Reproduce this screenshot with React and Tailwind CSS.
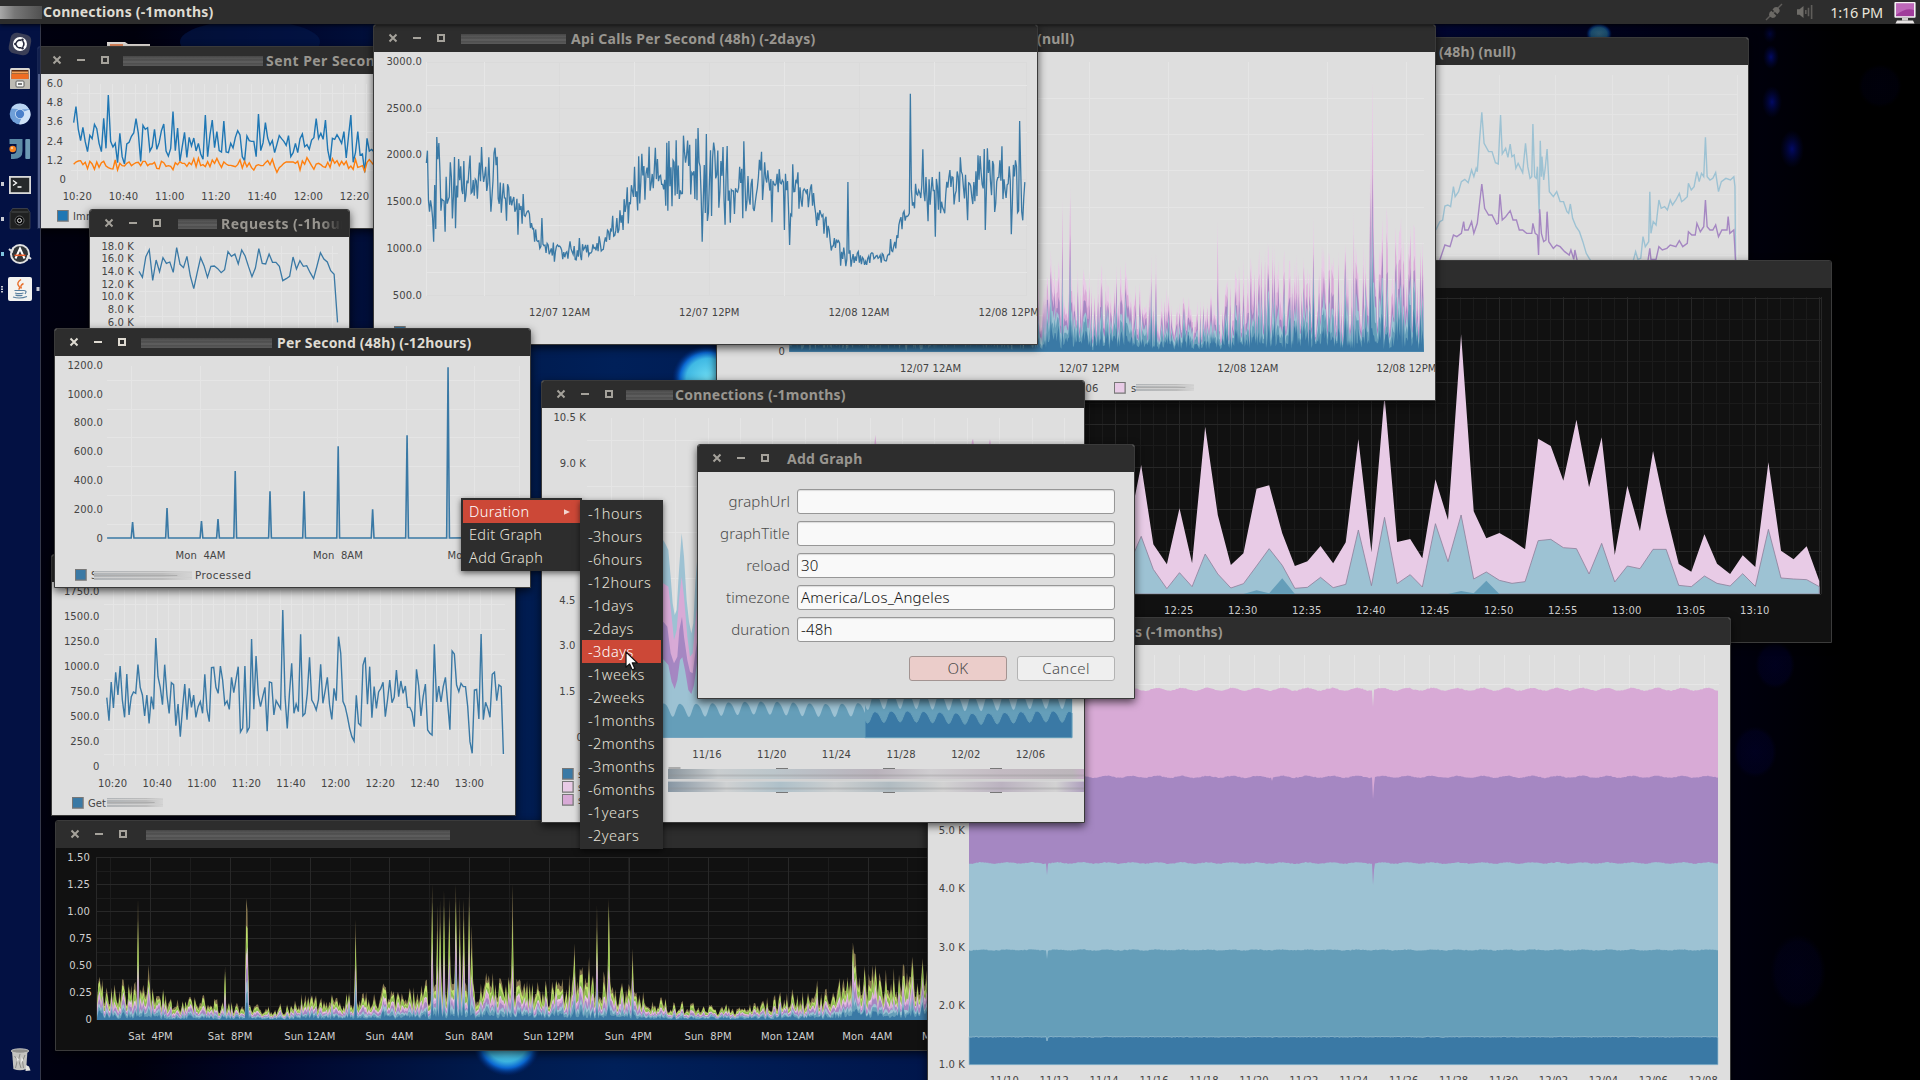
import React from "react";

/* ---------- helpers ---------- */

function rng(seed) {
  let s = seed;
  return () => {
    s = (s * 1664525 + 1013904223) % 4294967296;
    return s / 4294967296;
  };
}

function lerpAt(keys, x) {
  if (x <= keys[0][0]) return keys[0].slice(1);
  for (let i = 1; i < keys.length; i++) {
    if (x <= keys[i][0]) {
      const a = keys[i - 1];
      const b = keys[i];
      const t = (x - a[0]) / (b[0] - a[0]);
      return a.slice(1).map((v, k) => v + (b[k + 1] - v) * t);
    }
  }
  return keys[keys.length - 1].slice(1);
}

const even = (ys, x0, dx) => ys.map((y, i) => `${(x0 + i * dx).toFixed(1)},${y}`).join(" ");

function stack({ seed, x0, x1, dx, base, keys, spikes, shares, jitter }) {
  const rand = rng(seed);
  const cols = [];
  for (let x = x0; x <= x1; x += dx) {
    const [h] = lerpAt(keys, x);
    let total = h * (1 - jitter + jitter * 1.6 * Math.pow(rand(), 1.15));
    const spike = spikes.find((s) => Math.abs(s[0] - x) <= dx / 2);
    if (spike) total = base - spike[1];
    const parts = shares.map((s) => s * (0.3 + 1.4 * rand()));
    const sum = parts.reduce((a, b) => a + b, 0);
    let acc = 0;
    cols.push([x, parts.map((p) => (acc += (p / sum) * total))]);
  }
  return shares
    .map((_, k) => `${x0},${base} ` + cols.map(([x, c]) => `${x.toFixed(1)},${(base - c[k]).toFixed(1)}`).join(" ") + ` ${x1},${base}`)
    .reverse();
}

const STEEL = "#3a79a5";
const MID = "#659eb9";
const LIGHT = "#9dc2d3";
const VIOLET = "#a587c2";
const ORCHID = "#d8aad6";
const PINK = "#e8cbe6";

/* ---------- chart primitives ---------- */

function Labels({ items, anchor = "middle", dark }) {
  return (
    <g fontFamily='"DejaVu Sans", sans-serif' fontSize="10" letterSpacing="0.1" textAnchor={anchor} fill={dark ? "#cfcfcf" : "#444"}>
      {items.map(([t, x, y], i) => (
        <text key={i} x={x} y={y + 3.7}>{t}</text>
      ))}
    </g>
  );
}

function Grid({ xs, ys, x0, x1, y0, y1, color = "#e6e6e6" }) {
  return (
    <g stroke={color} strokeWidth="1" fill="none">
      {xs.map((x, i) => <path key={"x" + i} d={`M${Math.round(x) + 0.5} ${y0}V${y1}`} />)}
      {ys.map((y, i) => <path key={"y" + i} d={`M${x0} ${Math.round(y) + 0.5}H${x1}`} />)}
    </g>
  );
}

const range = (a, b, s) => {
  const out = [];
  for (let v = a; v <= b; v += s) out.push(v);
  return out;
};

function Line({ points, color = STEEL, width = 1.3 }) {
  return <polyline points={points} fill="none" stroke={color} strokeWidth={width} vectorEffect="non-scaling-stroke" />;
}

function Swatch({ x, y, color }) {
  return (
    <g>
      <rect x={x} y={y} width="12" height="12" fill="#a9a9a9" />
      <rect x={x + 0.5} y={y + 0.5} width="10.5" height="10.5" fill={color} stroke="#777" />
    </g>
  );
}

function Blur({ x, y, w, h = 9, id }) {
  return (
    <g>
      <defs>
        <linearGradient id={id}>
          <stop offset="0" stopColor="#b1b5b8" />
          <stop offset="0.7" stopColor="#bcbcbc" />
          <stop offset="1" stopColor="#c4c4c4" stopOpacity="0.35" />
        </linearGradient>
      </defs>
      <rect x={x} y={y} width={w} height={h} fill={`url(#${id})`} />
      <path d={`M${x} ${y + 1.5}h${w}M${x} ${y + h - 2.5}h${w}`} stroke="#cfcfcf" />
      <path d={`M${x} ${y + h / 2}h${w * 0.85}`} stroke="#adadad" />
    </g>
  );
}

/* ---------- window chrome ---------- */

function Controls({ active }) {
  return (
    <svg className="-mt-px ml-[13px] h-[12px] w-[60px] shrink-0" viewBox="0 0 60 12" fill="none" stroke={active ? "#dfdbd2" : "#a5a29b"} strokeWidth="2">
      <path d="M2.5 2.5l7 7M9.500 2.5l-7 7" />
      <path d="M26 6h8" />
      <rect x="51" y="3" width="6" height="6" />
    </svg>
  );
}

function Window({ x, y, w, h, title, smudge = 0, gap = 4, pad = 16, dark, active, fade, tracking = "tracking-[0.22px]", children }) {
  return (
    <section
      className={`absolute flex flex-col overflow-hidden rounded-t-[3px] border shadow-[0_3px_9px_rgba(0,0,0,0.65)] ${dark ? "border-[#3b3b3b] bg-[#111111]" : "border-[#3a3a3a] bg-[#dedede]"}`}
      style={{ left: x, top: y, width: w, height: h }}
    >
      <header className="flex h-[27px] shrink-0 items-center bg-[#2d2d2d]">
        <Controls active={active} />
        {smudge > 0 && (
          <span
            className="mt-px h-[10px] shrink-0 bg-[linear-gradient(180deg,#464646,#565656_25%,#4c4c4c_40%,#626262_60%,#505050_75%,#5a5a5a)]"
            style={{ width: smudge, marginLeft: pad }}
          />
        )}
        <span
          className={`whitespace-pre text-[14px] leading-[20px] font-bold font-["Noto_Sans",sans-serif] ${tracking} ${active ? "text-[#dfdbd2]" : "text-[#999690]"} ${fade ? "overflow-hidden [mask-image:linear-gradient(90deg,#000_82%,transparent)]" : ""}`}
          style={{ marginLeft: smudge > 0 ? gap : pad, width: fade }}
        >
          {title}
        </span>
      </header>
      {typeof children === "function" ? (
        <svg className="block shrink-0" width={w - 2} height={h - 29} viewBox={`${x + 1} ${y + 28} ${w - 2} ${h - 29}`}>
          {children()}
        </svg>
      ) : (
        children
      )}
    </section>
  );
}

/* ---------- series data ---------- */

const SENT = [368,320,388,422,382,425,455,406,416,373,386,430,455,355,445,285,424,441,430,488,400,470,492,432,427,409,399,356,400,484,376,388,383,453,440,388,448,428,392,372,453,468,445,335,452,384,484,440,397,472,412,438,414,453,430,462,478,345,470,405,360,443,395,452,456,363,456,458,430,444,412,392,405,470,482,408,422,424,424,470,342,452,428,368,414,435,422,458,433,407,416,424,436,407,470,458,430,458,416,402,440,434,448,420,413,356,415,400,418,360,450,484,415,418,404,416,430,395,474,408,345,487,457,395,465,462,517,415,453,448,456];
const SENT_B = [493,486,483,482,494,487,506,484,492,508,486,502,488,484,498,503,506,507,480,510,490,497,498,490,486,497,492,488,487,497,484,484,497,492,492,487,505,506,484,488,499,497,499,509,488,494,485,490,490,499,488,494,476,500,475,497,494,500,485,500,480,490,475,490,502,486,492,496,496,498,500,494,480,504,484,500,489,503,510,497,494,497,497,488,482,494,478,500,517,503,497,490,486,486,486,486,490,484,510,483,493,473,485,497,508,492,490,494,500,502,487,502,476,490,482,497,484,494,484,505,498,508,478,502,500,497,514,487,479,487,496];
const REQ = [814,832,770,749,841,780,815,773,790,786,817,743,793,803,769,828,866,818,773,797,832,799,798,806,818,809,755,769,762,792,750,768,800,830,804,746,790,792,762,787,787,799,842,836,829,771,807,782,799,797,818,836,798,758,777,786,812,823,967];
const GET = [353,422,306,384,277,345,258,360,412,282,405,350,336,340,254,322,345,408,345,430,350,388,174,290,322,374,254,345,400,308,314,437,372,470,385,312,419,325,382,345,412,380,365,400,283,390,425,263,262,322,340,258,300,374,363,388,292,338,298,260,456,444,258,455,442,177,388,228,343,380,350,322,454,306,308,405,362,374,386,90,350,445,340,250,400,372,395,163,407,400,340,232,360,372,390,360,253,370,333,292,375,418,325,362,170,220,364,380,410,445,470,483,346,430,437,255,232,373,260,413,320,385,336,325,307,410,360,300,368,352,270,350,303,340,318,382,382,397,440,268,318,408,350,312,450,460,465,193,366,318,366,320,292,370,449,213,222,315,335,310,320,320,380,485,520,330,328,417,162,419,367,385,412,283,277,362,315,320,522];

const SPIKES = [[385,606],[485,564],[585,603],[633,597],[683,453],[784,514],[883,514],[982,379],[1082,568],[1182,346],[1301,142]];
const PROCESSED = "311,654 " + SPIKES.map(([x, y]) => `${x - 4},654 ${x},${y} ${x + 4},654`).join(" ") + " 1420,653";

function apiCalls() {
  const keys = [[130,470,620],[150,450,660],[170,500,680],[200,490,600],[230,490,590],[260,480,600],[290,480,600],[310,520,620],[330,590,640],[350,590,670],[370,650,700],[400,720,750],[430,730,780],[470,720,780],[510,730,770],[540,700,750],[560,660,720],[580,610,680],[600,550,640],[620,500,610],[640,490,620],[670,450,600],[700,440,580],[730,420,530],[760,440,620],[800,460,620],[830,480,620],[860,480,620],[900,490,590],[940,510,580],[970,520,640],[1000,550,600],[1030,600,670],[1060,680,730],[1090,720,785],[1125,760,795],[1160,765,785],[1190,750,780],[1210,700,740],[1235,630,670],[1260,530,600],[1300,540,630],[1340,540,610],[1370,500,610],[1400,480,600],[1440,480,600],[1480,470,590],[1511,520,640]];
  const marks = [[132,452],[137,635],[155,411],[147,725],[152,687],[173,695],[185,487],[197,685],[216,483],[257,441],[274,472],[279,635],[289,443],[315,662],[341,704],[352,582],[397,654],[593,562],[610,500],[643,440],[657,443],[681,617],[685,428],[687,632],[705,421],[713,597],[757,384],[766,725],[775,402],[787,648],[792,428],[804,623],[813,441],[818,674],[823,438],[830,668],[840,642],[859,655],[863,424],[877,614],[902,455],[927,667],[955,690],[967,735],[972,647],[996,620],[1019,553],[1085,797],[1102,546],[1245,281],[1274,448],[1288,664],[1303,710],[1325,640],[1337,510],[1362,472],[1377,661],[1406,468],[1420,690],[1440,636],[1457,439],[1478,703],[1499,363],[1502,636]];
  const rand = rng(77);
  const out = [];
  for (let x = 130; x <= 1511; x += 2.4) {
    const [hi, lo] = lerpAt(keys, x);
    const m = marks.find((k) => Math.abs(k[0] - x) <= 1.2);
    const r = 0.5 + (rand() - 0.5) * (rand() < 0.6 ? 1.6 : 0.9);
    out.push(`${x.toFixed(1)},${(m ? m[1] : hi + (lo - hi) * r).toFixed(1)}`);
  }
  return out.join(" ");
}
const API = apiCalls();

const BURST = stack({
  seed: 9, x0: -424, x1: 694, dx: 1.7, base: 1055, jitter: 0.72,
  keys: [[-424,140],[0,150],[60,205],[100,175],[140,205],[200,140],[260,140],[290,105],[320,130],[350,155],[380,205],[430,235],[480,205],[520,240],[560,225],[600,275],[650,295],[694,265]],
  spikes: [[36,750],[57,590],[71,560],[168,780],[214,760],[222,755],[331,660],[361,810],[399,800],[427,735],[448,750],[499,650],[515,735],[535,770],[571,630],[600,400],[602,245],[604,420],[629,620],[652,700],[658,715],[688,730]],
  shares: [1.3,1,0.9,0.8,1,1],
});

const LOAD = stack({
  seed: 31, x0: 162, x1: 1560, dx: 2.2, base: 630, jitter: 0.58,
  keys: [[160,96],[200,92],[260,78],[300,56],[340,56],[400,42],[440,36],[480,38],[520,74],[560,66],[600,60],[640,82],[680,86],[720,100],[780,108],[800,100],[830,126],[860,106],[900,88],[950,102],[980,130],[1010,106],[1050,80],[1080,64],[1120,48],[1180,42],[1240,33],[1280,54],[1330,74],[1380,76],[1400,98],[1415,180],[1425,172],[1440,130],[1480,122],[1510,134],[1546,124]],
  spikes: [[166,500],[231,265],[247,465],[375,468],[411,265],[413,300],[594,328],[720,222],[729,285],[735,270],[740,238],[749,265],[760,222],[768,262],[774,268],[782,240],[787,345],[855,222],[959,400],[982,440],[995,285],[1015,265],[1056,415],[1364,510],[1522,440],[1540,445]],
  shares: [1,0.7,0.6,0.8,0.6,0.4,1,0.8,1],
});
const LOAD_COLORS = [STEEL, MID, LIGHT, VIOLET, ORCHID, PINK, "#8fbd52", "#bfe06c", "#84754e"].reverse();

const CPU_A = "715,690 722,665 727,660 731,618 736,615 741,620 746,560 749,590 755,575 760,545 766,538 772,548 778,510 782,530 786,505 788,515 792,420 796,337 800,430 808,455 814,455 820,488 825,492 829,345 832,462 838,445 842,472 846,432 849,470 853,465 856,505 860,490 868,518 873,430 877,500 881,535 884,530 886,372 889,530 892,535 894,500 897,640 899,422 901,530 902,470 905,540 908,500 911,447 915,575 922,590 928,575 934,605 940,605 946,635 949,640 952,612 956,655 962,680 968,695 974,725 980,760 987,780 1000,800 1060,800 1067,755 1071,778 1076,775 1080,710 1084,740 1090,725 1092,575 1094,700 1098,665 1103,675 1108,600 1112,625 1118,620 1123,630 1128,600 1132,615 1138,600 1144,580 1148,605 1152,600 1158,590 1160,550 1165,570 1170,560 1175,515 1179,545 1183,520 1187,530 1190,412 1193,530 1198,540 1203,535 1208,518 1213,575 1218,545 1226,535 1234,540 1240,530 1242,560 1243,780";
const CPU_B = "722,780 731,735 740,740 746,705 752,710 760,700 764,665 766,690 772,690 778,665 782,700 788,670 796,552 801,625 808,645 814,645 822,672 825,670 828,583 832,660 838,650 846,632 851,660 857,660 862,690 868,690 875,700 884,700 886,670 890,700 894,705 896,765 898,628 901,700 905,725 909,720 911,635 914,725 922,745 928,735 934,740 942,755 950,765 953,750 958,778 960,750 965,790 1088,790 1092,745 1094,778 1103,778 1108,740 1114,750 1122,745 1128,735 1138,740 1144,722 1150,740 1158,730 1160,695 1166,705 1172,705 1175,670 1181,695 1187,680 1190,600 1193,680 1198,690 1203,690 1208,675 1213,710 1219,690 1228,690 1230,650 1233,700 1240,690 1243,780";

const PEAK_A = "32,882 32,700 58,690 85,495 110,733 138,793 164,625 190,790 217,380 243,645 270,795 296,760 323,566 349,556 376,700 402,798 428,784 455,738 481,790 507,727 533,417 560,757 587,285 613,726 640,717 665,775 692,538 718,660 745,103 771,634 797,715 824,699 850,721 877,748 904,416 930,438 956,542 983,359 1009,562 1035,412 1062,765 1088,557 1114,694 1141,453 1168,638 1194,792 1220,815 1247,703 1273,791 1300,822 1326,766 1352,801 1379,487 1405,752 1431,778 1458,739 1484,843 1484,882";
const PEAK_B = "32,882 58,800 85,709 110,808 138,866 164,818 190,860 217,762 243,822 270,864 296,851 323,798 349,746 376,796 402,865 428,862 455,832 481,863 507,853 533,690 560,857 587,652 613,851 640,824 665,861 692,671 718,785 745,645 771,837 797,816 824,841 850,850 877,845 904,722 930,718 956,743 983,746 1009,822 1035,730 1062,846 1088,798 1114,806 1141,748 1168,748 1194,856 1220,860 1247,828 1273,850 1300,858 1326,821 1352,859 1379,688 1405,834 1431,837 1458,839 1484,860 1484,882";

function band(y, amp, dips, seed) {
  const rand = rng(seed);
  const pts = [];
  for (let x = 969; x <= 1718; x += 1) {
    const dip = dips.find((d) => Math.abs(d[0] - x) <= 0.5);
    const wave = Math.sin(((x - 951) * 2 * Math.PI) / 25) * -amp;
    pts.push(`${x},${dip ? dip[1] : (y + wave + (rand() - 0.5) * 0.9).toFixed(1)}`);
  }
  return `969,1064.7 ${pts.join(" ")} 1718,1064.7`;
}

function dayWave(x0, x1, mid, amp, phase) {
  const pts = [];
  for (let x = x0; x <= x1; x += 1) {
    const a = ((x - phase) * 2 * Math.PI) / 16.2;
    const t = Math.sin(a) + 0.15 * Math.sin(2 * a + 1);
    pts.push(`${x},${(mid - amp * t - 1.2 * Math.sin(x / 23)).toFixed(1)}`);
  }
  return `${x0},737.7 ${pts.join(" ")} ${x1},737.7`;
}

/* ---------- windows ---------- */

function SentWindow() {
  return (
    <Window x={37} y={46} w={360} h={183} title="Sent Per Second" smudge={140} pad={12} gap={3} tracking="tracking-[0.45px]">
      {() => (
        <>
          <Grid x0={71} x1={400} y0={84} y1={180} xs={range(77, 400, 11.57)} ys={[93, 112, 131, 151, 170]} color="#e5e5e5" />
          <Labels anchor="end" items={[["6.0", 63, 83], ["4.8", 63, 102], ["3.6", 63, 121.5], ["2.4", 63, 141], ["1.2", 63, 160], ["0", 66, 179]]} />
          <Labels items={["10:20", "10:40", "11:00", "11:20", "11:40", "12:00", "12:20"].map((t, i) => [t, 77.3 + i * 46.2, 196])} />
          <g transform="scale(0.33333)">
            <Line points={even(SENT, 221, 6.93)} color="#1f77b4" width={1.4} />
            <Line points={even(SENT_B, 221, 6.93)} color="#ff7f0e" width={1.4} />
          </g>
          <Swatch x={57} y={210} color="#1f77b4" />
          <Labels anchor="start" items={[["Imr", 73, 216]]} />
        </>
      )}
    </Window>
  );
}

function RequestsWindow() {
  return (
    <Window x={89} y={209} w={261} h={160} title="Requests (-1hours)" smudge={39} pad={15} gap={4} fade={121} tracking="tracking-[0.5px]">
      {() => (
        <>
          <Grid x0={139} x1={338} y0={246} y1={330} xs={range(145, 336, 17)} ys={[253, 278, 291, 316]} color="#e5e5e5" />
          <Labels anchor="end" items={["18.0 K", "16.0 K", "14.0 K", "12.0 K", "10.0 K", "8.0 K", "6.0 K"].map((t, i) => [t, 134, 246 + i * 12.65])} />
          <g transform="scale(0.33333)">
            <Line points={even(REQ, 417, 10.27)} />
          </g>
        </>
      )}
    </Window>
  );
}

function GetWindow() {
  return (
    <Window x={51} y={554} w={465} h={262} title="">
      {() => (
        <>
          <Grid x0={104} x1={505} y0={590} y1={766} xs={range(112.6, 500, 11.14)} ys={[604, 629, 654, 679, 704, 729, 754]} color="#e5e5e5" />
          <Labels anchor="end" items={["1750.0", "1500.0", "1250.0", "1000.0", "750.0", "500.0", "250.0", "0"].map((t, i) => [t, 99.5, 591 + i * 25])} />
          <Labels items={["10:20", "10:40", "11:00", "11:20", "11:40", "12:00", "12:20", "12:40", "13:00"].map((t, i) => [t, 112.6 + i * 44.6, 783])} />
          <g transform="translate(0 580) scale(0.34439 0.33333)">
            <Line points={even(GET, 310, 6.47)} width={1.4} />
          </g>
          <Swatch x={72} y={797} color={STEEL} />
          <Labels anchor="start" items={[["Get", 88, 803]]} />
          <Blur id="bGet" x={107} y={798} w={56} />
        </>
      )}
    </Window>
  );
}

function ProcessedWindow() {
  return (
    <Window x={54} y={328} w={477} h={260} title="Per Second (48h) (-12hours)" smudge={131} pad={13} gap={5} active tracking="tracking-[0.2px]">
      {() => (
        <>
          <Grid x0={107} x1={519} y0={366} y1={539} xs={[131, 200, 269, 337, 406, 474, 519]} ys={[380, 409, 437, 466, 495, 524]} color="#e5e5e5" />
          <Labels anchor="end" items={["1200.0", "1000.0", "800.0", "600.0", "400.0", "200.0", "0"].map((t, i) => [t, 103, 365 + i * 28.8])} />
          <Labels items={[["Mon\u00a0 4AM", 200.5, 555], ["Mon\u00a0 8AM", 338, 555]]} />
          <Labels anchor="start" items={[["Mo", 447.5, 555]]} />
          <g transform="translate(0 320) scale(0.34439 0.33333)">
            <Line points={PROCESSED} width={1.6} />
          </g>
          <Swatch x={75} y={569} color={STEEL} />
          <Labels anchor="start" items={[["S", 91, 575]]} />
          <g letterSpacing="0.45">
            <text x="195" y="578.7" fontFamily='"DejaVu Sans", sans-serif' fontSize="10.4" fill="#444">Processed</text>
          </g>
          <Blur id="bProc" x={94} y={571} w={98} />
        </>
      )}
    </Window>
  );
}

function ApiWindow() {
  return (
    <Window x={373} y={24} w={665} h={321} title="Api Calls Per Second (48h) (-2days)" smudge={105} pad={14} gap={5} tracking="tracking-[0.25px]">
      {() => (
        <>
          <Grid x0={426} x1={1027} y0={62} y1={296} xs={[559, 709, 859, 1026]} ys={[62, 108, 155, 179, 202, 249, 295]} color="#dadada" />
          <Grid x0={426} x1={1027} y0={62} y1={296} xs={[426, 484, 634, 784, 934]} ys={[85, 132, 225, 272]} />
          <Labels anchor="end" items={["3000.0", "2500.0", "2000.0", "1500.0", "1000.0", "500.0"].map((t, i) => [t, 422, 61 + i * 46.8])} />
          <Labels items={["12/07 12AM", "12/07 12PM", "12/08 12AM", "12/08 12PM"].map((t, i) => [t, 559.6 + i * 149.7, 312])} />
          <g transform="translate(370 0) scale(0.43367 0.33333)">
            <Line points={API} />
          </g>
          <Swatch x={394} y={326} color={STEEL} />
        </>
      )}
    </Window>
  );
}

function BurstWindow() {
  return (
    <Window x={716} y={24} w={720} h={377} title="(null)" smudge={200} pad={47} gap={0}>
      {() => (
        <>
          <Grid x0={790} x1={1424} y0={62} y1={352} xs={[1010, 1089, 1168, 1248, 1327, 1406]} ys={[98, 134, 170, 207, 243, 279, 315]} color="#e5e5e5" />
          <Labels anchor="end" items={[["0", 785, 351]]} />
          <g transform="translate(1030 0) scale(0.5676 0.33333)">
            {BURST.map((p, i) => <polygon key={i} points={p} fill={[PINK, ORCHID, VIOLET, LIGHT, MID, STEEL][i]} />)}
          </g>
          <Labels items={["12/07 12AM", "12/07 12PM", "12/08 12AM", "12/08 12PM"].map((t, i) => [t, 930.6 + i * 158.6, 368])} />
          <Labels anchor="start" items={[["06", 1085.5, 388], ["s", 1131, 388]]} />
          <Swatch x={1114} y={382} color={PINK} />
          <Blur id="bNull" x={1136} y={384} w={58} h={7} />
        </>
      )}
    </Window>
  );
}

function CpuWindow() {
  return (
    <Window x={1260} y={37} w={489} h={240} title="(48h) (null)" smudge={80} pad={21} gap={4}>
      {() => (
        <>
          <Grid x0={1400} x1={1738} y0={75} y1={270} xs={[1499, 1555, 1612, 1668, 1737]} ys={[94, 114, 134, 154, 174, 194, 214, 234, 255]} color="#e4e4e4" />
          <g transform="translate(1030 0) scale(0.5676 0.33333)">
            <Line points={CPU_A} color={LIGHT} width={1.4} />
            <Line points={CPU_B} color={VIOLET} width={1.4} />
          </g>
        </>
      )}
    </Window>
  );
}

function PeakWindow() {
  return (
    <Window x={1050} y={260} w={782} h={383} title="" dark>
      {() => (
        <>
          <Grid x0={1060} x1={1821} y0={297} y1={594} xs={range(1089, 1821, 12.8)} ys={range(319, 590, 42)} color="#1b1b1b" />
          <Grid x0={1060} x1={1821} y0={297} y1={594} xs={[...range(1114.5, 1821, 64), 1820.5]} ys={[298, ...range(340, 590, 42.2)]} color="#272727" />
          <g transform="translate(1100 300) scale(0.4847 0.33333)">
            <polygon points={PEAK_A} fill={PINK} />
            <polygon points={PEAK_B} fill={LIGHT} stroke="#8d7f99" strokeWidth="0.8" vectorEffect="non-scaling-stroke" />
            <polygon points="296,882 323,871 349,880 376,835 402,882" fill={MID} />
            <polygon points="718,882 745,873 771,880 797,842 824,882" fill={MID} />
          </g>
          <path d="M1060 594.5H1821" stroke="#2b2b2b" />
          <Labels dark items={["12:25", "12:30", "12:35", "12:40", "12:45", "12:50", "12:55", "13:00", "13:05", "13:10"].map((t, i) => [t, 1178.7 + i * 64, 610])} />
        </>
      )}
    </Window>
  );
}

function LoadWindow() {
  return (
    <Window x={55} y={820} w={900} h={231} title="" smudge={304} pad={17} dark>
      {() => (
        <>
          <Grid x0={96} x1={950} y0={858} y1={1020} xs={range(110.4, 950, 39.85)} ys={range(871, 1010, 27)} color="#1d1d1d" />
          <Grid x0={96} x1={950} y0={858} y1={1020} xs={[96, ...range(150.3, 950, 79.7)]} ys={range(857, 1010, 27)} color="#282828" />
          <Labels dark anchor="end" items={["1.50", "1.25", "1.00", "0.75", "0.50", "0.25", "0"].map((t, i) => [t, i < 3 ? 90 : 92, 857 + i * 27.05])} />
          <g transform="translate(0 810) scale(0.5995 0.33333)">
            {LOAD.map((p, i) => <polygon key={i} points={p} fill={LOAD_COLORS[i]} />)}
          </g>
          <Labels dark items={["Sat\u00a0 4PM", "Sat\u00a0 8PM", "Sun 12AM", "Sun\u00a0 4AM", "Sun\u00a0 8AM", "Sun 12PM", "Sun\u00a0 4PM", "Sun\u00a0 8PM", "Mon 12AM", "Mon\u00a0 4AM", "Mon\u00a0 8AM"].map((t, i) => [t, 150.5 + i * 79.65, 1036.5])} />
        </>
      )}
    </Window>
  );
}

function ServersWindow() {
  const days = ["11/10", "11/12", "11/14", "11/16", "11/18", "11/20", "11/22", "11/24", "11/26", "11/28", "11/30", "12/02", "12/04", "12/06", "12/08"];
  return (
    <Window x={927} y={617} w={804} h={480} title="s (-1months)" smudge={110} pad={18} gap={6} tracking="tracking-[0.1px]">
      {() => (
        <>
          <Grid x0={969} x1={1719} y0={655} y1={1064} xs={range(979, 1719, 25)} ys={[684]} />
          <polygon points={band(689.3, 1.4, [[1373, 707]], 3)} fill={ORCHID} />
          <polygon points={band(776.8, 1, [[1272, 781], [1373, 799], [1374, 785]], 4)} fill={VIOLET} />
          <polygon points={band(863, 0.7, [[1047, 875], [1373, 885], [1374, 870]], 5)} fill={LIGHT} />
          <polygon points={band(950, 0.4, [[1047, 959]], 6)} fill={MID} />
          <polygon points={band(1036.8, 0.1, [[1047, 1041]], 7)} fill={STEEL} stroke={LIGHT} strokeWidth="0.7" />
          <Labels anchor="end" items={["5.0 K", "4.0 K", "3.0 K", "2.0 K", "1.0 K"].map((t, i) => [t, 965, 830 + i * 58.55])} />
          <Labels items={days.map((t, i) => [t, 1004.3 + i * 49.93, 1080.5])} />
        </>
      )}
    </Window>
  );
}

function ConnectionsWindow() {
  return (
    <Window x={541} y={380} w={544} h={443} title="Connections (-1months)" smudge={47} pad={11} gap={2}>
      {() => (
        <>
          <Grid x0={587} x1={1073} y0={418} y1={738} xs={range(610.5, 1073, 32.4)} ys={[440, 486, 532, 578]} color="#e5e5e5" />
          <g transform="translate(450 370) scale(0.33333)">
            <polygon fill={LIGHT} points="560,1103 560,560 600,760 640,510 648,525 655,540 662,620 668,700 674,735 680,720 687,600 695,490 702,560 710,690 717,755 724,790 730,760 736,640 742,560 780,900 900,900 1867,900 1867,1103" />
            <polygon fill={ORCHID} points="560,1103 600,760 640,640 655,650 662,710 672,810 680,780 688,680 695,620 702,680 712,800 720,860 728,850 736,760 742,700 760,960 760,1103" />
            <polygon fill={VIOLET} points="560,1103 600,860 640,755 652,770 662,850 672,880 682,860 688,780 696,740 702,800 712,870 720,905 728,910 736,850 742,810 760,960 760,1103" />
            <polygon fill={LIGHT} points="560,1103 600,900 640,868 655,885 665,935 674,957 682,930 690,870 697,862 705,900 715,960 724,972 732,945 742,870 780,970 780,1103" />
            <path d="M1273 224l3 -30 3 30zM1564 224l2 -10 3 -8 3 18zM1616 224l4 -16 3 16z" fill={ORCHID} />
          </g>
          <polygon points={dayWave(650, 865, 708.5, 6.5, 676.5)} fill={MID} />
          <polygon points={dayWave(865, 1072, 701, 8, 871.5)} fill={MID} />
          <polygon points={dayWave(865, 1072, 717, 5.5, 871.5)} fill={STEEL} stroke={MID} strokeWidth="1" />
          <Labels anchor="end" items={[["10.5 K", 586, 417], ["9.0 K", 586, 463]]} />
          <Labels anchor="end" items={[["4.5", 575.5, 600], ["3.0", 575.5, 645.5], ["1.5", 575.5, 691.5], ["0", 583, 737]]} />
          <Labels items={["11/16", "11/20", "11/24", "11/28", "12/02", "12/06"].map((t, i) => [t, 707 + i * 64.7, 754])} />
          <Swatch x={562} y={768} color={STEEL} />
          <Swatch x={562} y={781} color={PINK} />
          <Swatch x={562} y={794} color={ORCHID} />
          <Labels anchor="start" items={[["s", 578, 774], ["s", 578, 787], ["s", 578, 800]]} />
          <defs>
            <linearGradient id="legendA">
              <stop offset="0" stopColor="#89949c" />
              <stop offset="0.12" stopColor="#c9cdcf" />
              <stop offset="0.25" stopColor="#bcc6cb" />
              <stop offset="0.5" stopColor="#b9b2bb" />
              <stop offset="0.63" stopColor="#cfcdd0" />
              <stop offset="0.8" stopColor="#c3bac2" />
              <stop offset="0.97" stopColor="#bcb6bb" />
              <stop offset="1" stopColor="#c7acc8" />
            </linearGradient>
            <linearGradient id="legendB">
              <stop offset="0" stopColor="#8796a3" />
              <stop offset="0.14" stopColor="#cfd1d2" />
              <stop offset="0.27" stopColor="#aec0c9" />
              <stop offset="0.4" stopColor="#cccfd0" />
              <stop offset="0.53" stopColor="#b0bbc1" />
              <stop offset="0.66" stopColor="#d2d2d2" />
              <stop offset="0.8" stopColor="#bbb2c0" />
              <stop offset="0.93" stopColor="#d2d2d2" />
              <stop offset="1" stopColor="#ad9dbd" />
            </linearGradient>
          </defs>
          <path d="M668.5 768h12M776 768.5h12M883 768.5h12M990 768.5h12M776 792.5h12M883 792.5h12M990 792.5h12" stroke="#777" />
          <rect x="668" y="769" width="417" height="10" fill="url(#legendA)" />
          <rect x="668" y="781.5" width="417" height="10.5" fill="url(#legendB)" />
          <path d="M668 775.5h417M668 788.5h417" stroke="#8f8f8f" strokeOpacity="0.3" strokeWidth="2" />
          <path d="M668 780h417" stroke="#d2d2d2" strokeWidth="2" />
        </>
      )}
    </Window>
  );
}

/* ---------- dialog and menus ---------- */

const UI = 'font-["Noto_Sans",sans-serif]';

function AddGraphDialog() {
  const rows = [["graphUrl", ""], ["graphTitle", ""], ["reload", "30"], ["timezone", "America/Los_Angeles"], ["duration", "-48h"]];
  return (
    <Window x={697} y={444} w={438} h={255} title="Add Graph" pad={16}>
      <div className={`flex flex-col gap-[7px] pt-[17px] pr-[19px] text-[15px] font-light ${UI}`}>
        {rows.map(([label, value]) => (
          <label key={label} className="flex h-[25px] items-center">
            <span className="w-[92px] pb-[2px] text-right leading-[20px] tracking-[0.1px] text-[#4c4c4c]">{label}</span>
            <span className="ml-[7px] flex h-[25px] flex-1 items-center rounded-[3px] border border-[#979797] bg-[#f9f9f9] pb-[2px] pl-[3px] leading-[20px] tracking-[0.22px] text-[#111] shadow-[inset_0_1px_1px_rgba(0,0,0,0.12)]">
              {value}
            </span>
          </label>
        ))}
        <div className="mt-[7px] flex justify-end gap-[10px] tracking-[0.4px] text-[#4c4c4c]">
          <button className="h-[25px] w-[98px] rounded-[3px] border border-[#a39492] bg-[#ebcdca] leading-none">OK</button>
          <button className="h-[25px] w-[98px] rounded-[3px] border border-[#b3b3b3] bg-[#efefef] leading-none">Cancel</button>
        </div>
      </div>
    </Window>
  );
}

function Menus() {
  const durations = ["-1hours", "-3hours", "-6hours", "-12hours", "-1days", "-2days", "-3days", "-1weeks", "-2weeks", "-1months", "-2months", "-3months", "-6months", "-1years", "-2years"];
  return (
    <>
      <ul className={`absolute top-[498px] left-[461px] flex w-[121px] flex-col bg-[#2d2d2d] p-[2px] text-[14.5px] font-light tracking-[0.35px] text-[#e6e2d9] shadow-[0_2px_6px_rgba(0,0,0,0.6)] ${UI}`}>
        <li className="flex h-[23px] items-center justify-between bg-[#cc4837] pr-[10px] pl-[6px] text-white">
          Duration
          <svg className="h-[6px] w-[6px]" viewBox="0 0 6 6"><path d="M0 0.3L6 3L0 5.7z" fill="#f3d5cf" /></svg>
        </li>
        <li className="flex h-[23px] items-center pl-[6px]">Edit Graph</li>
        <li className="flex h-[23px] items-center pl-[6px]">Add Graph</li>
      </ul>
      <ul className={`absolute top-[500px] left-[580px] flex w-[83px] flex-col bg-[#2d2d2d] p-[2px] text-[14.5px] font-light tracking-[0.45px] text-[#e6e2d9] shadow-[0_2px_6px_rgba(0,0,0,0.6)] ${UI}`}>
        {durations.map((d) => (
          <li key={d} className={`flex h-[23px] items-center pl-[6px] whitespace-nowrap ${d === "-3days" ? "bg-[#cc4837] text-white" : ""}`}>{d}</li>
        ))}
      </ul>
      <svg className="absolute top-[651px] left-[625px] h-[21px] w-[14px]" viewBox="0 0 14 21">
        <path d="M1 1v15.2l3.6-3.3 2.6 6 2.7-1.2-2.6-5.8h5z" fill="#fff" stroke="#111" strokeWidth="1.2" strokeLinejoin="round" />
      </svg>
    </>
  );
}

/* ---------- panel, launcher, wallpaper ---------- */

function TopPanel() {
  return (
    <header className={`absolute top-0 left-0 flex h-[24px] w-[1920px] items-center bg-[#2d2d2d] text-[#dfdbd2] shadow-[0_1px_4px_rgba(0,0,0,0.8)] ${UI}`}>
      <span className="h-[13px] w-[42px] bg-[linear-gradient(90deg,#a8a8a8,#777_35%,#505050)]" />
      <span className="ml-[1px] text-[14px] leading-none font-bold tracking-[0.2px]">Connections (-1months)</span>
      <span className="ml-auto flex items-center pr-[4px]">
        <svg className="h-[18px] w-[18px]" viewBox="0 0 18 18">
          <path d="M1 17L17 1" stroke="#5f5d5a" strokeWidth="1.4" />
          <path d="M4.500 9.500l1.800-1.800 5 5-1.700 1.700q-2.400 1.200-4.400-.6t-.7-4.300z" fill="#6b6965" />
          <path d="M7.500 6.500l1.800-2q2.200-1.400 4.200.5t.6 4.300l-1.800 2z" fill="#6b6965" />
        </svg>
        <svg className="ml-[14px] h-[16px] w-[16px]" viewBox="0 0 16 16">
          <path d="M0 5.2h2.500L6.500 2v12L2.500 10.8H0z" fill="#6f6d69" />
          <path d="M8.800 6v4M11.500 3.800v8.400M14.600 1v14" stroke="#5f5d5a" strokeWidth="1.6" />
        </svg>
        <span className="mr-[11px] ml-[17px] text-[14.5px] leading-none tracking-[-0.25px] text-[#e8e4db]">1:16 PM</span>
        <svg className="h-[23px] w-[22px]" viewBox="0 0 22 23">
          <rect x="0.4" y="1" width="21.2" height="15.800" rx="1" fill="#f4f0f3" />
          <rect x="2" y="2.600" width="18" height="12.600" fill="#a03c9b" />
          <path d="M2 2.600h18v6.400Q12 6 2 14z" fill="#bd68b9" />
          <path d="M8 17h6v2.500H8z" fill="#cfcccc" />
          <path d="M3 19.500h16l1.500 3h-19z" fill="#e6e3e3" />
        </svg>
      </span>
    </header>
  );
}

function Launcher() {
  return (
    <nav className="absolute top-[24px] left-0 flex h-[1056px] w-[41px] flex-col border-r border-[#33374a] bg-[rgba(5,26,96,0.65)]">
      <svg className="block" width="40" height="1056" viewBox="0 24 40 1056">
        <g>
          <rect x="9.5" y="33.500" width="21" height="21" rx="6" fill="#3b3f57" transform="rotate(12 20 44)" />
          <circle cx="20" cy="44" r="7" fill="#fff" />
          <circle cx="20" cy="44" r="3.900" fill="none" stroke="#23263a" strokeWidth="1.6" />
          <path d="M20 44m-6 0h3M23 39l-1.500 2.600M23 49l-1.500-2.600" stroke="#fff" strokeWidth="1.200" />
          <circle cx="15.300" cy="44" r="1.200" fill="#23263a" />
          <circle cx="22.500" cy="39.800" r="1.200" fill="#23263a" />
          <circle cx="22.500" cy="48.200" r="1.200" fill="#23263a" />
        </g>
        <g>
          <rect x="10" y="68" width="20" height="21" rx="1.500" fill="#d8d6d0" />
          <rect x="11.500" y="70" width="17" height="9" fill="#5b2c14" />
          <path d="M12 71.500h16v2H12z" fill="#f5a35a" />
          <path d="M11.500 74h17v5h-17z" fill="#ee6d23" />
          <rect x="10" y="79" width="20" height="10" rx="1" fill="#bdbab3" />
          <rect x="16" y="81" width="8" height="6" rx="1" fill="#f6f6f6" stroke="#5f5f5f" />
          <path d="M18 84h4" stroke="#555" strokeWidth="1.500" />
        </g>
        <g>
          <circle cx="20" cy="114" r="10.300" fill="#6f9fd8" />
          <path d="M20 109.300L11 108.500A10.300 10.300 0 0 1 29.200 109.300z" fill="#b9d4f2" />
          <path d="M24 111.500L29.500 109.500A10.300 10.300 0 0 1 19 124.300z" fill="#cfe2f7" />
          <circle cx="20" cy="114" r="4.900" fill="#d3e4f8" />
          <circle cx="20" cy="114" r="4.200" fill="#4a80cb" />
        </g>
        <g>
          <path d="M9.500 139h13v12q0 8-9 8h-2.500v-5h1.500q4 0 4-4v-6h-7z" fill="#5b8aa6" />
          <rect x="25.300" y="139" width="4.800" height="20" rx="1" fill="#6d9ab5" />
          <circle cx="12.700" cy="149" r="3.300" fill="#f58220" />
          <circle cx="12" cy="148" r="1.200" fill="#ffc48a" />
        </g>
        <g>
          <rect x="9" y="176" width="22" height="18" fill="#d9d9d9" />
          <rect x="10.800" y="177.800" width="18.400" height="14.400" fill="#26292b" />
          <path d="M13 180.500l3.500 2.500-3.500 2.500M17.500 187h4" stroke="#fff" strokeWidth="1.300" fill="none" />
        </g>
        <g>
          <path d="M12.500 208.500h15l2.500 4v15.500q0 1-1 1H11q-1 0-1-1V212.500z" fill="#1f2021" stroke="#55575a" strokeWidth="0.600" />
          <path d="M11.500 212h17" stroke="#4a4c4e" />
          <circle cx="19.500" cy="220.500" r="4.500" fill="#0d0d0e" stroke="#77797b" strokeWidth="0.800" />
          <circle cx="19.500" cy="220.500" r="2" fill="none" stroke="#ddd" />
        </g>
        <g>
          <circle cx="20" cy="254" r="10" fill="#e2e2e2" />
          <circle cx="20" cy="254" r="8" fill="#33373a" />
          <path d="M9 249l3 2.500 1.500-4M31 259l-3-2.500-1.500 4" stroke="#e2e2e2" strokeWidth="2" fill="none" />
          <path d="M15.500 258.500L20 248.500l4.500 10" stroke="#fff" strokeWidth="2" fill="none" />
          <path d="M14.500 255.300h11" stroke="#ef5b25" strokeWidth="1.500" />
        </g>
        <g>
          <rect x="8" y="277" width="24" height="24" rx="2" fill="#f3f3f1" />
          <path d="M21 279.500q-5 3.500-2.200 6.500q1.800 2-.3 3.500M23.500 283.500q-4 2-2 5" stroke="#e76f2b" strokeWidth="1.400" fill="none" />
          <path d="M14.500 290.500h9.500M15 293q4.500 1.300 8.500 0M24 290.500q3.500.3 1 3.500M13 297q7 2.200 14-.5M15.500 295.200q4 1 7 0" stroke="#587f9f" strokeWidth="1.200" fill="none" />
        </g>
        <g>
          <path d="M12 1050.500h15.500l-1.300 18.500q-6 2.400-12.800 0z" fill="#c4c4c0" />
          <ellipse cx="20" cy="1051" rx="8.800" ry="2.200" fill="#8f8f8c" stroke="#c9c9c6" strokeWidth="0.900" />
          <path d="M14.500 1056l3 4-2 8M20 1054l-1.500 6 2.500 8M25 1055l-2.500 6 1 7" stroke="#8b8b87" strokeWidth="1" fill="none" />
          <path d="M16 1057l3 2-1 4zM21.500 1057l2 3-2.500 3z" fill="#e9e9e6" />
          <path d="M26 1065l3 1.500 1.500 4-5 .5z" fill="#e3e3e0" />
        </g>
        <g fill="#c9cbd3">
          <rect x="1" y="182" width="3" height="4" />
          <rect x="1" y="217" width="3" height="4" />
          <rect x="1" y="252" width="3" height="4" fill="#7fc4de" />
          <path d="M1 286h2v1.500H1zM1 288.500h2v1.500H1zM1 291h2v1.500H1z" />
          <rect x="36.500" y="287" width="3" height="4" />
        </g>
      </svg>
    </nav>
  );
}

function Wallpaper() {
  return (
    <svg className="absolute inset-0" width="1920" height="1080" viewBox="0 0 1920 1080">
      <defs>
        <linearGradient id="deep">
          <stop offset="0" stopColor="#000010" />
          <stop offset="0.07" stopColor="#00000c" />
          <stop offset="0.14" stopColor="#00052a" />
          <stop offset="0.25" stopColor="#001a4c" />
          <stop offset="0.32" stopColor="#002059" />
          <stop offset="0.5" stopColor="#00154a" />
          <stop offset="0.75" stopColor="#000630" />
          <stop offset="0.9" stopColor="#00000f" />
          <stop offset="0.96" stopColor="#000000" />
        </linearGradient>
        <radialGradient id="orb">
          <stop offset="0" stopColor="#6fdcf2" />
          <stop offset="0.6" stopColor="#3fb9e4" />
          <stop offset="0.78" stopColor="#0a66d0" />
          <stop offset="1" stopColor="#00247a" stopOpacity="0" />
        </radialGradient>
        <radialGradient id="drop">
          <stop offset="0" stopColor="#020a66" />
          <stop offset="1" stopColor="#010640" stopOpacity="0" />
        </radialGradient>
        <radialGradient id="haze">
          <stop offset="0" stopColor="#01012c" />
          <stop offset="0.8" stopColor="#010122" />
          <stop offset="1" stopColor="#010118" stopOpacity="0" />
        </radialGradient>
      </defs>
      <rect width="1920" height="1080" fill="url(#deep)" />
      <ellipse cx="250" cy="42" rx="70" ry="22" fill="#03194d" opacity="0.6" />
      <ellipse cx="708" cy="379" rx="36" ry="34" fill="url(#orb)" />
      <ellipse cx="507" cy="1040" rx="35" ry="36" fill="url(#orb)" />
      <ellipse cx="1599" cy="34" rx="13" ry="11" fill="url(#orb)" opacity="0.4" />
      <ellipse cx="1770" cy="34" rx="7" ry="9" fill="url(#drop)" opacity="0.5" />
      <ellipse cx="1771" cy="57" rx="8" ry="12" fill="url(#drop)" />
      <ellipse cx="1772" cy="102" rx="10" ry="16" fill="url(#drop)" />
      <ellipse cx="1792" cy="149" rx="12" ry="19" fill="url(#drop)" />
      <ellipse cx="1880" cy="86" rx="22" ry="22" fill="url(#haze)" opacity="0.25" />
      <ellipse cx="1775" cy="665" rx="20" ry="24" fill="url(#haze)" opacity="0.6" />
      <ellipse cx="1755" cy="752" rx="22" ry="26" fill="url(#haze)" opacity="0.6" />
      <ellipse cx="1798" cy="972" rx="28" ry="38" fill="url(#haze)" opacity="0.4" />
      <path d="M107 42h18l3 2h22v4h-43z" fill="#e6e0dc" />
      <path d="M110 44h13v3h-13z" fill="#e58a5f" />
      <path d="M128 46.5h23v2h-23z" fill="#00000c" />
    </svg>
  );
}

export default function App() {
  return (
    <main className="relative h-[1080px] w-[1920px] overflow-hidden bg-black">
      <Wallpaper />
      <SentWindow />
      <RequestsWindow />
      <CpuWindow />
      <PeakWindow />
      <BurstWindow />
      <ApiWindow />
      <GetWindow />
      <LoadWindow />
      <ServersWindow />
      <ConnectionsWindow />
      <ProcessedWindow />
      <AddGraphDialog />
      <Menus />
      <Launcher />
      <TopPanel />
    </main>
  );
}
